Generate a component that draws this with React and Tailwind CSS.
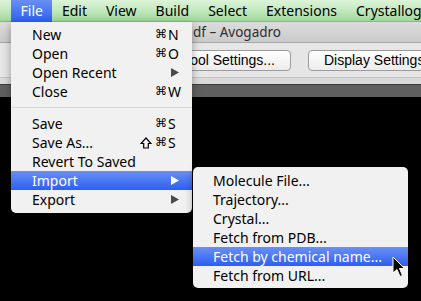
import React from 'react';

const menuBar = ['Edit', 'View', 'Build', 'Select', 'Extensions', 'Crystallography'];

const fileItems = [
  { label: 'New', key: 'N' },
  { label: 'Open', key: 'O' },
  { label: 'Open Recent', arrow: true },
  { label: 'Close', key: 'W' },
  { sep: true },
  { label: 'Save', key: 'S' },
  { label: 'Save As...', shift: true, key: 'S' },
  { label: 'Revert To Saved' },
  { label: 'Import', arrow: true, active: true },
  { label: 'Export', arrow: true },
];

const importItems = [
  'Molecule File...',
  'Trajectory...',
  'Crystal...',
  'Fetch from PDB...',
  'Fetch by chemical name...',
  'Fetch from URL...',
];

const activeBg = 'bg-gradient-to-b from-[#6a8ef5] to-[#2d5ff0] text-white';

function Arrow({ light }) {
  return (
    <svg width="8" height="9" viewBox="0 0 8 9" className="mr-[13px]">
      <polygon points="0,0 8,4.5 0,9" fill={light ? '#fff' : '#4a4a4a'} />
    </svg>
  );
}

// outlined shift arrow
function ShiftIcon() {
  return (
    <svg width="12" height="12" viewBox="0 0 12 12" className="mr-[3px]">
      <path d="M6 1 L11 6.5 L8.3 6.5 L8.3 11 L3.7 11 L3.7 6.5 L1 6.5 Z" fill="none" stroke="#000" strokeWidth="1.2" strokeLinejoin="miter" />
    </svg>
  );
}

function FileRow({ item }) {
  if (item.sep) {
    return (
      <div className="h-[13px] flex items-center">
        <div className="w-full h-px bg-[#d6d6d6]" />
      </div>
    );
  }
  return (
    <div className={`h-[19px] leading-[19px] flex items-center justify-between pl-[21px] ${item.active ? activeBg : ''}`}>
      <span>{item.label}</span>
      {item.arrow && <Arrow light={item.active} />}
      {item.key && (
        <span className="flex items-center mr-[10px]">
          {item.shift && <ShiftIcon />}
          <span className="font-['DejaVu_Sans',sans-serif] text-[12px] mr-[1px]">⌘</span>
          <span className="w-[14px] text-left">{item.key}</span>
        </span>
      )}
    </div>
  );
}

function Cursor() {
  return (
    <svg width="14" height="22" viewBox="0 0 14 22" className="absolute left-[392px] top-[256px]">
      <path d="M1 1 L1 17 L5 13.5 L8 20.5 L10.5 19.5 L7.5 12.5 L12.5 12.5 Z" fill="#000" stroke="#fff" strokeWidth="1" strokeLinejoin="round" />
    </svg>
  );
}

export default function App() {
  return (
    <div className="relative w-[421px] h-[301px] bg-black overflow-hidden text-black font-['Noto_Sans',sans-serif] text-[14px]">

      {/* Menu bar */}
      <div className="h-[22px] flex items-center pl-[11px] bg-gradient-to-b from-[#dcf4d8] via-[#c2e9bd] to-[#9fd79a] border-b border-[#86b882] whitespace-nowrap">
        <span className={`h-[22px] leading-[22px] px-[9.5px] ${activeBg}`}>File</span>
        {menuBar.map(m => (
          <span key={m} className="h-[22px] leading-[22px] px-[9.5px]">{m}</span>
        ))}
      </div>

      {/* Window title (left part hidden under the open menu) */}
      <div className="h-[21px] bg-gradient-to-b from-[#dcdcdc] to-[#cacaca] flex items-center pl-[193px] border-b border-[#a8a8a8]">
        <span className="text-[13.5px] text-[#2e2e2e] whitespace-nowrap">df – Avogadro</span>
      </div>

      {/* Toolbar */}
      <div className="h-[34px] bg-[#e6e6e6] flex items-center gap-[17px] pl-[150px] font-['Liberation_Sans',sans-serif] text-[14px] whitespace-nowrap">
        <div className="h-[21px] w-[141px] shrink-0 rounded-[4px] border border-[#9c9c9c] bg-gradient-to-b from-white to-[#ececec] flex items-center justify-end pr-[15px]">Tool Settings...</div>
        <div className="h-[21px] w-[130px] shrink-0 rounded-[4px] border border-[#9c9c9c] bg-gradient-to-b from-white to-[#ececec] flex items-center pl-[15px]">Display Settings...</div>
      </div>
      <div className="h-[7px] bg-[#dadada] border-t border-[#c4c4c4]" />
      <div className="h-[13px] bg-[#5f5f5f] border-t border-[#3a3a3a]" />

      {/* File menu */}
      <div className="absolute left-[11px] top-[22px] w-[181px] pt-[3px] pb-[4px] bg-[#f1f1f1] rounded-b-[5px] shadow-[0_3px_8px_rgba(0,0,0,0.35)] whitespace-nowrap">
        {fileItems.map((item, i) => <FileRow key={i} item={item} />)}
      </div>

      {/* Import submenu */}
      <div className="absolute left-[193px] top-[167px] w-[215px] pt-[4px] pb-[3px] bg-[#f1f1f1] rounded-[5px] shadow-[0_3px_8px_rgba(0,0,0,0.35)] whitespace-nowrap">
        {importItems.map((label, i) => (
          <div key={label} className={`h-[19px] leading-[19px] pl-[20px] ${i === 4 ? activeBg : ''}`}>{label}</div>
        ))}
      </div>

      <Cursor />
    </div>
  );
}
